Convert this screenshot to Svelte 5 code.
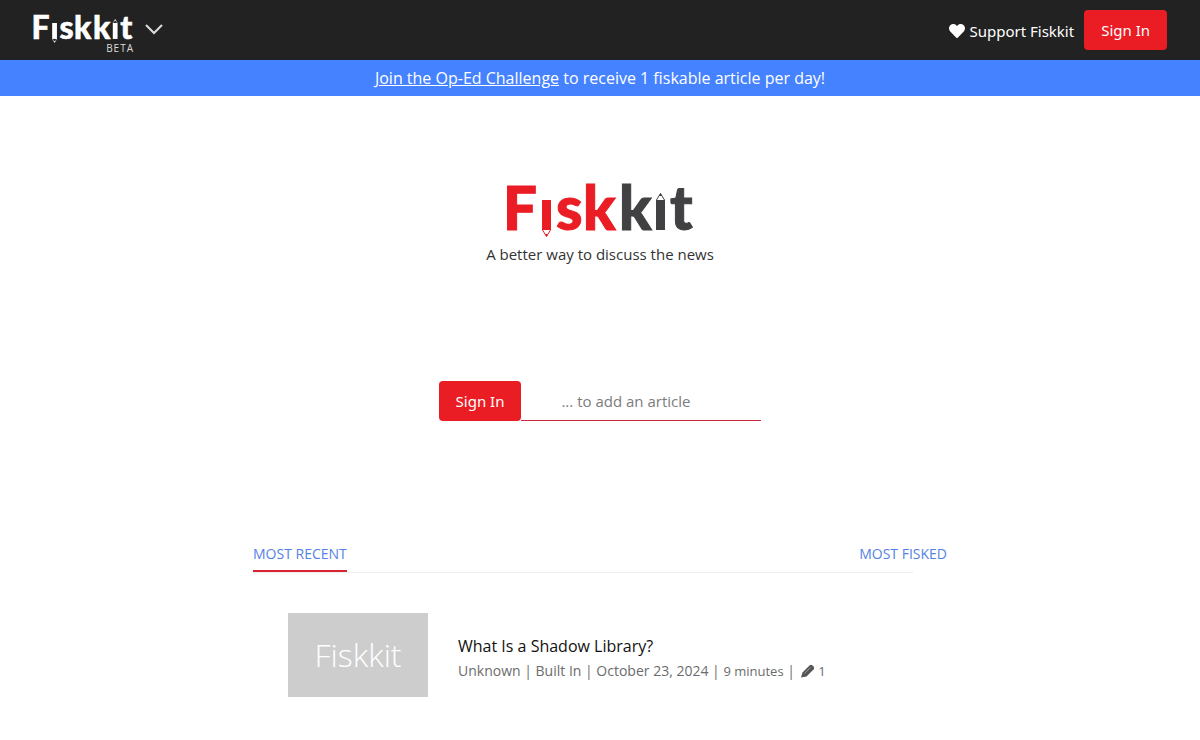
<script>
  let articleUrl = $state('');
  const banner = 'to receive 1 fiskable article per day!';
  const articles = [
    {
      title: 'What Is a Shadow Library?',
      author: 'Unknown',
      source: 'Built In',
      date: 'October 23, 2024',
      time: '9 minutes',
      fisks: 1
    }
  ];
</script>

{#snippet logo(first, second)}
  <svg class="wordmark" viewBox="0 0 188 52" role="img" aria-label="Fiskkit">
    <g class="letters" fill={first} stroke={first}>
      <text x="-3" y="45">F</text>
      <text x="50" y="45">s</text>
      <text x="77" y="45">k</text>
    </g>
    <g fill={first}>
      <path d="M36 15h9v30h-9z" />
      <path d="M36.500 45l4 6.500 4-6.500" fill="none" stroke={first} />
      <path d="M39 49h3l-1.500 3z" />
    </g>
    <g class="letters" fill={second} stroke={second}>
      <text x="113" y="45">k</text>
      <text x="164" y="45">t</text>
    </g>
    <g fill={second}>
      <path d="M150 15h9v30h-9z" />
      <path d="M150.500 15l4-6.500 4 6.500" fill="none" stroke={second} />
      <path d="M153 11h3l-1.500-3z" />
    </g>
  </svg>
{/snippet}

<header>
  <button class="brand" aria-label="Fiskkit menu">
    <span class="small-logo">
      {@render logo('#fff', '#fff')}
      <span class="beta">BETA</span>
    </span>
    <svg class="chevron" viewBox="0 0 18 11" aria-hidden="true">
      <path d="M1 1l8 8 8-8" fill="none" stroke="#ddd" stroke-width="2" />
    </svg>
  </button>
  <nav>
    <a class="support" href="#support">
      <svg class="heart" viewBox="0 0 512 512" aria-hidden="true">
        <path
          fill="currentColor"
          d="M462.300 62.600C407.500 15.900 326 24.300 275.700 76.200L256 96.500l-19.700-20.300C186.100 24.300 104.500 15.900 49.700 62.600c-62.800 53.600-66.100 149.800-9.900 207.900l193.500 199.800c12.500 12.900 32.800 12.900 45.300 0l193.500-199.800c56.300-58.100 53-154.300-9.800-207.900z"
        />
      </svg>
      Support Fiskkit
    </a>
    <button class="sign-in">Sign In</button>
  </nav>
</header>

<p class="banner"><a href="#challenge">Join the Op-Ed Challenge</a> {banner}</p>

<main>
  <section class="hero">
    <h1>{@render logo('#ea1c24', '#414042')}</h1>
    <p>A better way to discuss the news</p>
  </section>

  <form class="add" onsubmit={(e) => e.preventDefault()}>
    <button class="sign-in">Sign In</button>
    <input type="text" aria-label="Article address" placeholder="... to add an article" bind:value={articleUrl} />
  </form>

  <section class="feed">
    <nav class="tabs">
      <a class="active" href="#recent">MOST RECENT</a>
      <a href="#fisked">MOST FISKED</a>
    </nav>
    {#each articles as article}
      <article>
        <div class="thumb">Fiskkit</div>
        <div class="info">
          <h2>{article.title}</h2>
          <p>
            {article.author} | {article.source} | {article.date} |
            <small>{article.time}</small> |
            <svg class="pencil" viewBox="0 0 14 14" aria-hidden="true">
              <path d="M0 13.500l1.500-5 7-7q1.500-1.500 3 0l1 1q1.500 1.500 0 3l-7 7z" fill="#555" />
              <path d="M3.500 9.500l6-6" stroke="#999" />
            </svg>
            <small>{article.fisks}</small>
          </p>
        </div>
      </article>
    {/each}
  </section>
</main>

<style>
  :global(body) {
    margin: 0;
    background: #fff;
    color: #222;
    font: 16px/24px "Open Sans", sans-serif;
  }
  h1, h2, p { margin: 0; font-weight: 400; }
  button, input { font: inherit; }
  svg { display: block; }
  header {
    display: flex;
    justify-content: space-between;
    align-items: center;
    height: 60px;
    padding: 0 33px;
    background: #222;
  }
  .brand {
    display: flex;
    gap: 12px;
    padding: 0;
    border: 0;
    background: none;
    color: #fff;
  }
  .small-logo { display: block; width: 100px; padding-top: 8px; }
  .wordmark { width: 100%; overflow: visible; }
  .letters { font-family: Lato, sans-serif; font-size: 60px; font-weight: 900; stroke-width: 1px; }
  .beta {
    display: block;
    font-size: 10px;
    line-height: 10px;
    text-align: right;
    letter-spacing: 1px;
    margin-right: -1px;
    color: #ddd;
  }
  .chevron { width: 18px; height: 11px; margin-top: 17px; }
  header nav { display: flex; align-items: center; gap: 10px; }
  .support {
    display: flex;
    align-items: center;
    gap: 4px;
    padding-top: 2px;
    color: #fff;
    font-family: "Noto Sans", sans-serif;
    font-size: 15px;
    text-decoration: none;
  }
  .heart { width: 16px; height: 16px; }
  .sign-in {
    height: 40px;
    padding: 0 17px;
    border: 0;
    border-radius: 4px;
    background: #ea1c24;
    color: #fff;
    font-family: "Noto Sans", sans-serif;
    font-size: 15px;
  }
  .banner { padding: 6px 16px; background: #4582ff; color: #fff; text-align: center; }
  .banner a { color: inherit; }
  .hero { padding-top: 89px; text-align: center; }
  .hero h1 { width: 188px; margin: 0 auto; }
  .hero p { margin-top: 5px; font-size: 15px; color: #333; }
  .add { display: flex; justify-content: center; margin-top: 115px; }
  .add input {
    box-sizing: border-box;
    width: 240px;
    padding: 0 40px;
    border: 0;
    border-bottom: 1px solid #c8283c;
    background: none;
    color: #222;
    font-size: 15px;
  }
  .add input::placeholder { color: #7c7c7c; }
  .feed { max-width: 694px; margin: 121px auto 0; padding-bottom: 40px; }
  .tabs { display: flex; flex-wrap: wrap; justify-content: space-between; }
  .tabs a { padding-bottom: 4px; border-bottom: 2px solid transparent; color: #5482e4; font-size: 14px; text-decoration: none; }
  .tabs a.active { border-color: #d9232e; }
  .tabs::after { content: ""; flex: 0 0 100%; box-sizing: border-box; width: 100%; height: 1px; background: linear-gradient(#eee, #eee) left / calc(100% - 34px) no-repeat; }
  article { display: flex; align-items: center; gap: 30px; padding: 40px 35px 0; }
  .thumb {
    flex: none;
    width: 140px;
    line-height: 84px;
    background: #cdcdcd;
    color: #fff;
    font-size: 32px;
    font-weight: 300;
    text-align: center;
  }
  h2 { margin-bottom: 1px; color: #111; font-size: 16px; line-height: 24px; }
  .info { padding-top: 7px; }
  .info p { color: #6c6c6c; font-size: 14px; line-height: 24px; }
  small { font-size: 13px; }
  .pencil { display: inline-block; width: 14px; height: 14px; margin-left: 2px; vertical-align: -2px; }
</style>
